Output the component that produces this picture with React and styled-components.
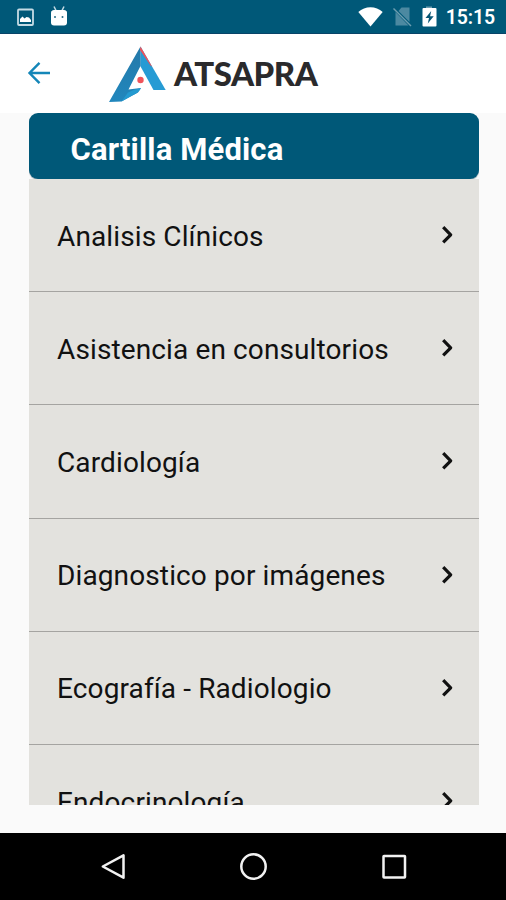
import React from 'react';
import styled, { createGlobalStyle } from 'styled-components';

const GlobalStyle = createGlobalStyle`
  :root {
    --petrol: #005878;
    --blue: #1486b8;
    --sand: #e3e2de;
    --page: #fafafa;
  }

  body {
    margin: 0;
    font-family: Roboto, 'Liberation Sans', sans-serif;
  }
`;

const Screen = styled.div`
  width: 506px;
  height: 900px;
  overflow: hidden;
  display: flex;
  flex-direction: column;
  background: var(--page);
`;

const StatusBar = styled.div`
  flex: none;
  height: 34px;
  box-sizing: border-box;
  padding: 0 11px 0 16px;
  display: flex;
  align-items: center;
  justify-content: space-between;
  color: #fff;
  background: var(--petrol);
  border-bottom: 1px solid #084468;
`;

const StatusIcons = styled.div`
  display: flex;
  align-items: center;

  svg {
    display: block;
    margin-left: ${props => props.$gap || 0}px;
  }

  svg:first-child {
    margin-left: 0;
  }
`;

const Clock = styled.span`
  margin-left: 9px;
  padding-top: 3px;
  font-size: 19.5px;
  line-height: 34px;
  font-weight: 600;
  letter-spacing: -0.1px;
`;

const Header = styled.header`
  flex: none;
  height: 79px;
  display: flex;
  align-items: flex-start;
  background: #fff;
`;

const BackButton = styled.button`
  margin: 27px 0 0 27px;
  padding: 0;
  border: 0;
  background: none;
  color: var(--blue);

  svg {
    display: block;
  }
`;

const Brand = styled.div`
  margin: 12px 0 0 57px;
  display: flex;
  align-items: flex-start;
`;

const BrandName = styled.span`
  margin: 7px 0 0 8px;
  font-family: Lato, sans-serif;
  font-size: 33px;
  line-height: 40px;
  font-weight: 900;
  letter-spacing: -0.5px;
  color: #2a2a2c;
`;

const Content = styled.main`
  flex: none;
  width: 450px;
  height: 692px;
  margin-left: 28.5px;
  overflow: hidden;
`;

const Title = styled.h1`
  margin: 0;
  height: 66px;
  box-sizing: border-box;
  padding: 4px 0 0 42px;
  border-radius: 9px;
  font-size: 31px;
  line-height: 65px;
  font-weight: 700;
  letter-spacing: 0.15px;
  color: #fff;
  background: var(--petrol);
  box-shadow: 0 1px 1px #8fa3ac;
`;

const List = styled.ul`
  margin: 0;
  padding: 0;
  list-style: none;
  background: var(--sand);
`;

const Row = styled.li`
  height: 113.2px;
  box-sizing: border-box;
  padding: 0 25px 0 28.5px;
  display: flex;
  align-items: center;
  justify-content: space-between;
  border-bottom: 1px solid #a5a4a1;
  color: #111;

  svg {
    display: block;
  }
`;

const RowLabel = styled.span`
  padding-top: 2px;
  font-size: 28px;
  letter-spacing: 0.12px;
`;

const NavBar = styled.nav`
  flex: none;
  height: 67px;
  margin-top: auto;
  background: #000;

  svg {
    display: block;
  }
`;

const PictureIcon = () => (
  <svg width="19" height="21" viewBox="0 0 19 21">
    <rect x="2" y="3.5" width="15" height="15.5" rx="1" fill="none" stroke="#c5dbe4" strokeWidth="1.8" />
    <path d="M4 16V13L6.5 10.5L8.5 12.5L10.5 11L13 11.5L15 14V16Z" fill="#fff" />
  </svg>
);

const RobotIcon = () => (
  <svg width="18" height="21" viewBox="0 0 18 21">
    <path d="M4 0.5L6 4.5M14 0.5L12 4.5" stroke="#c5dbe4" strokeWidth="1.5" />
    <path d="M1 6.5Q1 4.5 4 4H14Q17 4.5 17 6.5V16.5Q17 19.5 14 19.5H4Q1 19.5 1 16.5Z" fill="#fff" />
    <circle cx="5" cy="11" r="1" fill="#286c87" />
    <circle cx="12.5" cy="11" r="1" fill="#286c87" />
  </svg>
);

const WifiIcon = () => (
  <svg width="25" height="21" viewBox="0 0 25 21">
    <path d="M0.3 6C7-0.5 18-0.5 24.7 6L12.5 20.5Z" fill="#fff" />
  </svg>
);

const NoSimIcon = () => (
  <svg width="19" height="21" viewBox="0 0 19 21">
    <path d="M8.5 1.5H16.5V16L5.5 5Z" fill="#4c89a1" />
    <path d="M2.5 6L15.5 19.5H2.5Z" fill="#4c89a1" />
    <path d="M0.5 2.5L18 20" stroke="#6d9db0" strokeWidth="1.5" />
  </svg>
);

const BatteryIcon = () => (
  <svg width="15" height="21" viewBox="0 0 15 21">
    <path d="M4 0.5H10V3H4Z" fill="#6d9db0" />
    <rect x="0.5" y="2" width="14" height="18.5" rx="1" fill="#fff" />
    <path d="M9.2 5L3.5 12H7L5.8 17.5L11.7 10.2H8.1Z" fill="#075675" />
  </svg>
);

const ArrowLeft = () => (
  <svg width="24" height="24" viewBox="0 0 24 24" fill="none" stroke="currentColor" strokeWidth="2.4">
    <path d="M23 12H3M12.5 1.8L2.5 12L12.5 22.2" />
  </svg>
);

const Logo = () => (
  <svg width="58" height="58" viewBox="0 0 58 58">
    <defs>
      <linearGradient id="leg" x1="0" y1="0" x2="0" y2="1">
        <stop offset="0" stopColor="#2479a9" />
        <stop offset="1" stopColor="#2187bd" />
      </linearGradient>
    </defs>
    <path d="M32.5 0.5L57.7 44H45.5L32.3 20Z" fill="#269bd4" />
    <path d="M32.5 0.5V20L20.5 43.5Q26 42.5 33 42L30 46.5L13.5 55.5L1 56Z" fill="url(#leg)" />
    <path d="M13.5 55.5L20 46.5Q26 43 33 42Q31 46.5 25 49Z" fill="#249ad0" />
    <path d="M32.5 0.5L44 20.5L42.8 20L32 4Z" fill="#f05159" />
    <circle cx="32.5" cy="34" r="3.2" fill="#f0535a" />
  </svg>
);

const Chevron = () => (
  <svg width="13" height="20" viewBox="0 0 13 20" fill="none" stroke="#111" strokeWidth="3.2" strokeLinejoin="round">
    <path d="M2.2 2.2L9.7 9.8L2.2 17.4" />
  </svg>
);

const NavIcons = () => (
  <svg width="506" height="67" viewBox="0 0 506 67" fill="none" stroke="#f2f2f2" strokeWidth="2.5" strokeLinejoin="round">
    <path d="M123.5 22.3V44.7L102.8 33.5Z" />
    <circle cx="253.5" cy="33.5" r="12.2" />
    <rect x="383.5" y="23" width="21.5" height="21.5" rx="0.5" />
  </svg>
);

const specialties = [
  'Analisis Clínicos',
  'Asistencia en consultorios',
  'Cardiología',
  'Diagnostico por imágenes',
  'Ecografía - Radiologio',
  'Endocrinología',
];

const App = () => {
  return (
    <Screen>
      <GlobalStyle />
      <StatusBar>
        <StatusIcons $gap={15}>
          <PictureIcon />
          <RobotIcon />
        </StatusIcons>
        <StatusIcons $gap={10}>
          <WifiIcon />
          <NoSimIcon />
          <BatteryIcon />
          <Clock>15:15</Clock>
        </StatusIcons>
      </StatusBar>
      <Header>
        <BackButton aria-label="Volver">
          <ArrowLeft />
        </BackButton>
        <Brand>
          <Logo />
          <BrandName>ATSAPRA</BrandName>
        </Brand>
      </Header>
      <Content>
        <Title>Cartilla Médica</Title>
        <List>
          {specialties.map(name => (
            <Row key={name}>
              <RowLabel>{name}</RowLabel>
              <Chevron />
            </Row>
          ))}
        </List>
      </Content>
      <NavBar>
        <NavIcons />
      </NavBar>
    </Screen>
  );
};

export default App;
